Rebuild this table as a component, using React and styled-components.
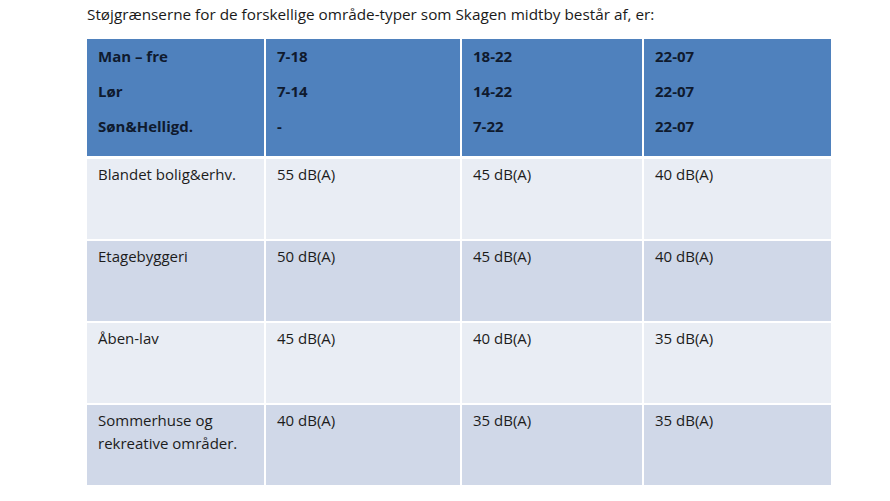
import styled, { createGlobalStyle } from "styled-components";

const GlobalStyle = createGlobalStyle`
  body {
    margin: 0;
    background: #ffffff;
    font-family: "Open Sans", "Liberation Sans", sans-serif;
    color: #1c1c1c;
  }
`;

const Page = styled.div`
  padding: 3px 0 0 87px;
`;

const Title = styled.p`
  margin: 0;
  height: 36px;
  font-size: 15.3px;
  line-height: 22px;
  color: #1a1a1a;
`;

const Table = styled.table`
  border-collapse: collapse;
  table-layout: fixed;
  width: 744px;
`;

const HeadCell = styled.th`
  background: #4f81bd;
  color: #0f1a2e;
  font-weight: 700;
  font-size: 15px;
  line-height: 35px;
  text-align: left;
  vertical-align: top;
  padding: 0 10px 12px 11px;
  height: 70px;
  border-left: 2px solid #fff;
  border-bottom: 3px solid #fff;
  &:first-child {
    border-left: none;
  }
`;

const Row = styled.tr`
  background: ${(p) => (p.$dark ? "#d0d8e8" : "#e9edf4")};
`;

const Cell = styled.td`
  font-size: 15px;
  line-height: 23px;
  vertical-align: top;
  padding: 4px 10px 0 11px;
  height: 76px;
  border-left: 2px solid #fff;
  border-top: 2px solid #fff;
  &:first-child {
    border-left: none;
  }
`;

const Line = styled.div``;

const header = [
  ["Man – fre", "Lør", "Søn&Helligd."],
  ["7-18", "7-14", "-"],
  ["18-22", "14-22", "7-22"],
  ["22-07", "22-07", "22-07"],
];

const rows = [
  [["Blandet bolig&erhv."], "55 dB(A)", "45 dB(A)", "40 dB(A)"],
  [["Etagebyggeri"], "50 dB(A)", "45 dB(A)", "40 dB(A)"],
  [["Åben-lav"], "45 dB(A)", "40 dB(A)", "35 dB(A)"],
  [["Sommerhuse og", "rekreative områder."], "40 dB(A)", "35 dB(A)", "35 dB(A)"],
];

export default function App() {
  return (
    <>
      <GlobalStyle />
      <Page>
        <Title>
          Støjgrænserne for de forskellige område-typer som Skagen midtby består af, er:
        </Title>
        <Table>
          <colgroup>
            <col style={{ width: 178 }} />
            <col style={{ width: 196 }} />
            <col style={{ width: 182 }} />
            <col style={{ width: 188 }} />
          </colgroup>
          <thead>
            <tr>
              {header.map((col, i) => (
                <HeadCell key={i}>
                  {col.map((l) => (
                    <Line key={l}>{l}</Line>
                  ))}
                </HeadCell>
              ))}
            </tr>
          </thead>
          <tbody>
            {rows.map((r, i) => (
              <Row key={i} $dark={i % 2 === 1}>
                <Cell>
                  {r[0].map((l) => (
                    <Line key={l}>{l}</Line>
                  ))}
                </Cell>
                <Cell>{r[1]}</Cell>
                <Cell>{r[2]}</Cell>
                <Cell>{r[3]}</Cell>
              </Row>
            ))}
          </tbody>
        </Table>
      </Page>
    </>
  );
}
